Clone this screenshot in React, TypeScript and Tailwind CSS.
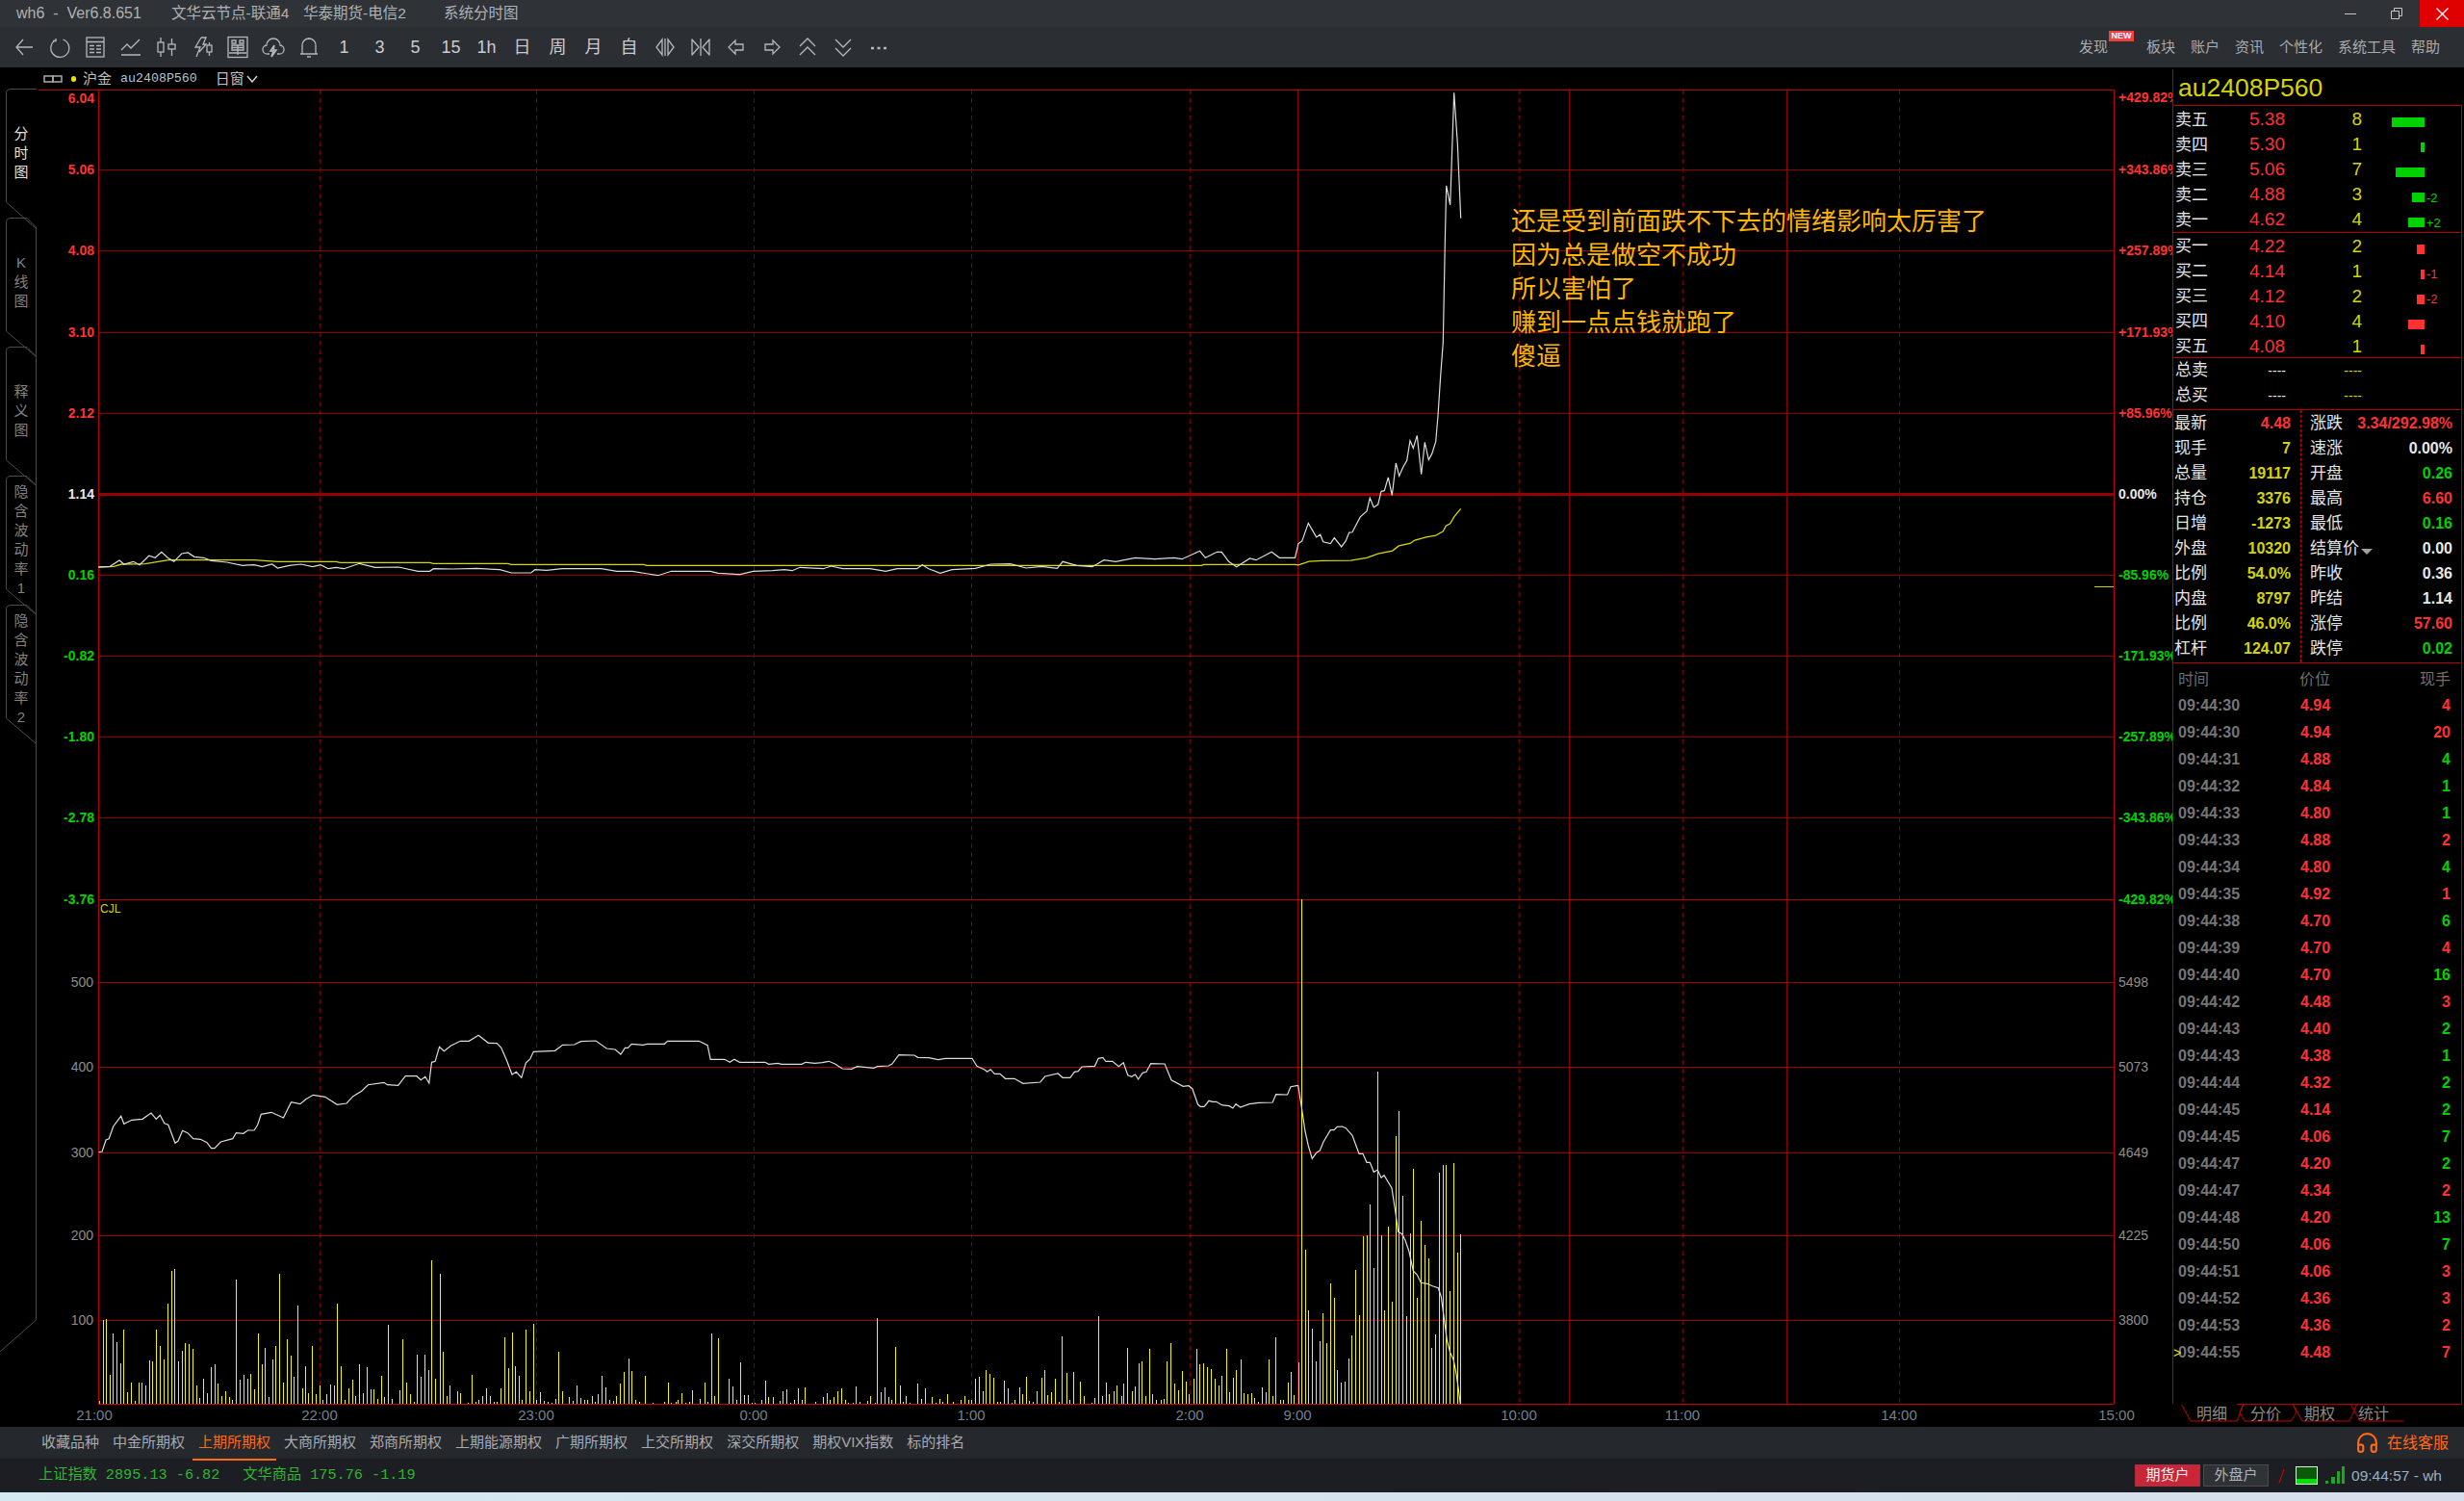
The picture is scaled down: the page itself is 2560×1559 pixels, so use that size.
import { Headphones } from 'lucide-react';

// traced from the reference, as flat [x, y, x, y ...] lists with their own offset and scale
const pairs = (flat: number[], ox: number, oy: number, sx: number, sy: number) => {
  const out: [number, number][] = [];
  for (let i = 0; i < flat.length; i += 2) out.push([ox + flat[i] / sx, oy + flat[i + 1] / sy]);
  return out;
};
const toLine = (p: [number, number][]) => p.map(([x, y]) => `${x.toFixed(1)},${y.toFixed(1)}`).join(' ');

const priceA = [15,147,30,145,42,126,48,138,60,130,68,140,80,112,88,118,96,100,104,118,112,130,122,105,130,102,138,115,150,118,160,127,180,132,200,142,215,140,225,146,238,138,245,150,260,142,275,138,290,146,300,140,310,152,320,148,330,152,350,136,370,148,400,147,425,160,440,160,445,152,470,153,500,151,530,155,545,165,570,165,575,155,590,157,610,152,640,152,660,152,680,160,700,160,720,168,733,173,750,160,780,160,800,160,810,166,838,170,855,160,880,158,895,155,905,158,915,148,945,152,955,144,970,152,1005,152,1025,160,1040,152,1065,152,1072,140,1080,152,1095,166,1110,155,1140,151,1160,138,1185,137,1205,150,1225,145,1245,151,1252,130,1270,142,1290,146,1305,125,1320,130,1345,118,1370,122,1395,118,1405,122,1428,97,1435,118,1450,100,1456,100,1465,130,1475,146,1492,120,1500,125,1520,100,1530,118,1550,118];
const priceB = [147,1405,158,1398,178,1344,203,1386,215,1378,224,1400,247,1405,259,1388,281,1415,295,1397,305,1372,315,1371,340,1325,360,1308,370,1268,382,1296,395,1288,405,1248,415,1246,427,1206,439,1260,451,1163,461,1202,473,1175,485,1155,495,1095,505,1118,517,1080,530,1197,541,1100,553,1153,563,1135,575,1098,582,1020,590,900,598,800,600,700,604,500,608,327,620,385,632,47,643,200,653,425];
const avgA = [15,147,35,145,45,138,75,137,105,125,215,125,245,130,320,130,325,133,440,133,445,136,540,136,545,139,715,139,718,142,1430,142,1433,139,1550,139];
const avgB = [147,1470,180,1459,220,1457,310,1456,360,1448,395,1436,440,1427,460,1412,495,1405,510,1395,545,1386,575,1381,598,1368,607,1352,620,1345,632,1325,653,1300];

const oiA = [28,410,36,408,45,372,52,368,62,330,80,298,87,322,105,310,130,307,150,288,162,307,171,295,181,320,190,325,206,382,213,375,223,343,235,350,248,368,265,370,280,380,290,398,298,398,312,378,340,368,348,350,365,352,375,342,390,342,398,325,406,292,430,286,458,303,476,254,497,260,510,245,527,232,555,238,583,262,605,258,620,236,640,220,655,200,692,193,700,200,725,202,742,173,768,173,778,185,788,175,797,195,803,130,811,127,821,82,832,95,848,78,870,64,890,64,912,46,935,70,955,71,965,85,978,125,990,168,1000,160,1012,178,1022,132,1032,120,1040,97,1090,94,1108,76,1135,75,1150,65,1185,63,1210,87,1230,90,1243,105,1253,85,1260,85,1268,73,1295,76,1305,73,1345,73,1352,64,1425,64,1445,77,1452,121,1485,121,1497,130,1507,121,1520,130,1560,130];
const oiB = [65,130,75,136,100,133,110,136,165,136,175,130,200,133,220,131,238,127,255,135,275,150,300,151,315,143,360,148,370,143,400,141,410,135,428,107,470,108,480,115,510,116,535,122,555,118,627,118,640,142,660,152,668,160,677,152,688,166,703,166,717,181,742,181,765,196,812,192,825,174,860,165,873,178,893,178,905,160,915,158,925,144,960,142,970,118,982,115,990,127,1008,127,1025,143,1038,131,1050,170,1060,175,1070,168,1078,183,1090,163,1100,160,1112,134,1150,135,1168,185,1200,205,1215,203,1225,212,1240,262,1247,268,1257,268,1270,250,1280,253,1290,253,1305,263,1325,266,1335,273,1343,260,1355,270,1380,260,1405,256,1443,255,1452,230,1483,231,1492,206,1512,202];
const oiC = [146,142,157,210,168,285,178,330,190,370,203,352,214,345,225,318,247,281,258,281,268,271,283,270,295,275,315,298,336,355,348,355,360,382,370,382,382,412,394,405,405,430,414,422,438,462,450,540,458,598,470,605,480,625,492,660,505,720,517,732,529,757,548,760,565,767,583,773,592,800,600,860,610,935,620,975,630,995,640,1045,652,1135];

const volA = [28,1185,37,932,45,930,53,1105,61,975,70,1002,78,1068,86,963,95,1158,103,1128,112,1185,120,1128,128,1128,137,1137,146,1060,153,1062,162,963,170,1015,180,1055,188,882,196,780,204,774,213,1062,222,1030,229,1005,238,1008,246,1023,255,1137,263,1175,272,1115,280,1160,290,1080,297,1071,305,1130,314,1170,323,1155,332,1173,339,1182,348,807,356,1118,365,1105,373,1115,381,1101,390,1150,399,975,407,1070,415,1020,423,1172,433,1055,439,1014,448,789,458,1128,466,993,475,1043,482,1110,491,888,501,1145,509,1077,516,1160,524,1014,533,1165,542,1136,549,1182,558,1163,567,1133,576,1137,583,882,592,1077,601,1182,610,1145,618,1118,626,1170,634,1071,643,1160,652,1080,660,1148,668,1148,677,1178,686,1107,692,1172,701,948,711,1178,727,1152,735,993,744,1128,753,1163,762,1188,769,1041,778,1110,786,1041,795,1089,802,747,812,1116,821,789,829,1032,837,1170,845,1137,862,1155,870,1161,887,1192,896,1104,904,1188,912,1182,921,1170,930,1146,939,1170,947,1188,955,1188,964,1146,972,987,980,1083,989,972,997,1077,1006,1107,1013,1182,1022,963,1031,1155,1040,945,1047,1182,1056,1158,1065,1185,1074,1188,1082,1192,1090,1180,1098,1032,1107,1155,1122,1173,1132,1185,1140,1137,1149,1176,1157,1182,1165,1182,1175,1170,1183,1188,1190,1164,1199,1107,1208,1143,1217,1182,1225,1185,1233,1170,1242,1131,1250,1095,1260,1053,1267,1092,1276,1182,1285,1188,1300,1107,1317,1192,1343,1188,1352,1128,1360,1192,1370,1188,1376,1182,1385,1161,1394,1192,1402,1188,1410,1152,1428,1180,1437,1128,1445,1188,1453,975,1461,1170,1470,990,1495,1115,1503,1140,1512,1182,1520,1065,1529,1167,1538,1167,1547,1192,1555,1190];
const volB = [55,1182,66,1122,74,1173,85,1173,105,1185,113,1155,123,1149,134,1191,144,1182,155,1146,164,1182,173,1143,202,1188,223,1173,233,1161,241,1182,252,1173,262,1155,272,1146,281,1182,291,1190,302,1191,312,1140,322,1188,341,1185,351,1170,362,1191,369,927,380,1158,390,1143,401,1173,408,1182,419,1017,430,1137,440,1188,448,1170,458,1191,479,1131,489,1180,498,1146,518,1173,528,1190,537,1179,547,1188,558,1164,576,1188,597,1182,607,1170,616,1182,625,1182,636,1116,646,1110,657,1155,665,1089,675,1101,685,1113,696,1188,704,1188,714,1122,725,1146,735,1191,743,1182,754,1143,764,1164,774,1110,782,1185,793,1188,803,1155,814,1113,824,1089,832,1167,842,1158,853,1116,863,1188,871,984,882,1098,892,1182,902,1095,921,1125,931,1170,950,1191,960,1176,970,921,981,1170,991,1128,999,1164,1010,1155,1020,1137,1031,1170,1038,1131,1049,1020,1060,1155,1070,1140,1078,1068,1088,1062,1098,1170,1109,1023,1117,1164,1127,1182,1138,1182,1148,1179,1156,1062,1166,1005,1177,1131,1187,1152,1198,1092,1206,1125,1216,1164,1227,1116,1237,1023,1245,1071,1255,1068,1265,1080,1276,1086,1285,1116,1295,1137,1305,1107,1316,1023,1324,1158,1334,1113,1344,1089,1355,1056,1365,1161,1374,1164,1384,1161,1394,1176,1404,1188,1413,1143,1423,1158,1433,1056,1443,1170,1451,987,1462,1182,1472,1182,1483,1128,1491,1095,1501,1167,1512,1065];
const volC = [157,-438,169,654,178,843,190,900,202,1002,214,939,223,852,235,945,247,759,259,804,268,1029,280,1068,292,1065,304,993,313,921,325,717,337,858,349,612,361,609,370,513,382,711,394,99,406,609,415,843,427,582,439,816,451,300,460,222,472,486,484,861,496,603,505,402,517,804,529,564,541,639,553,681,562,960,574,918,586,414,598,390,607,390,619,783,631,384,643,663,652,606];

const priceLine = toLine([...pairs(priceA, 90, 540, 1.2346, 3), ...pairs(priceB, 1300, 80, 3, 2.9)]);
const avgLine = toLine([...pairs(avgA, 90, 540, 1.2346, 3), ...pairs(avgB, 1300, 80, 3, 2.9)]);
const oiLine = toLine([...pairs(oiA, 90, 1060, 2.24, 3), ...pairs(oiB, 770, 1060, 2.613, 3), ...pairs(oiC, 1300, 1080, 3, 3)]);
const volBars = [...pairs(volA, 90, 1060, 2.24, 3), ...pairs(volB, 770, 1060, 2.613, 3), ...pairs(volC, 1300, 1080, 3, 3)];

const RED = '#ff3232';
const GREEN = '#00d200';
const YELLOW = '#d4d400';
const WHITE = '#e8e8e8';

const priceRows = [
  { y: 176, l: '5.06', lc: RED, r: '+343.86%', rc: RED },
  { y: 260, l: '4.08', lc: RED, r: '+257.89%', rc: RED },
  { y: 345, l: '3.10', lc: RED, r: '+171.93%', rc: RED },
  { y: 429, l: '2.12', lc: RED, r: '+85.96%', rc: RED },
  { y: 513, l: '1.14', lc: WHITE, r: '0.00%', rc: WHITE },
  { y: 597, l: '0.16', lc: GREEN, r: '-85.96%', rc: GREEN },
  { y: 681, l: '-0.82', lc: GREEN, r: '-171.93%', rc: GREEN },
  { y: 765, l: '-1.80', lc: GREEN, r: '-257.89%', rc: GREEN },
  { y: 849, l: '-2.78', lc: GREEN, r: '-343.86%', rc: GREEN },
  { y: 934, l: '-3.76', lc: GREEN, r: '-429.82%', rc: GREEN },
];
const volRows = [
  { y: 1020, l: '500', r: '5498' },
  { y: 1108, l: '400', r: '5073' },
  { y: 1197, l: '300', r: '4649' },
  { y: 1283, l: '200', r: '4225' },
  { y: 1371, l: '100', r: '3800' },
];
const dashed = [332, 557, 783, 1009, 1236, 1578, 1748, 1973];
const solid = [1348, 1630, 1856];
const timeLabels: [string, number][] = [
  ['21:00', 98], ['22:00', 332], ['23:00', 557], ['0:00', 783], ['1:00', 1009], ['2:00', 1236],
  ['9:00', 1348], ['10:00', 1578], ['11:00', 1748], ['14:00', 1973], ['15:00', 2199],
];

const Chart = () => (
  <svg viewBox="38 92 2219 1390" width={2219} height={1390} className="block text-[14px]">
    <g shapeRendering="crispEdges" fill="none">
      {dashed.map((x) => (
        <path key={x} d={`M${x}.5 93V1458`} stroke="#7a0000" strokeDasharray="5 4" />
      ))}
      {solid.map((x) => (
        <path key={x} d={`M${x}.5 93V1458`} stroke="#8f0000" />
      ))}
      {priceRows.filter((r) => r.y !== 513 && r.y !== 934).map((r) => (
        <path key={r.y} d={`M102 ${r.y}.5H2196`} stroke="#8f0000" />
      ))}
      {volRows.map((r) => (
        <path key={r.y} d={`M102 ${r.y}.5H2196`} stroke="#a00000" />
      ))}
      <path d="M40 93.5H2196" stroke="#b40000" />
      <path d="M102 513.5H2196" stroke="#960000" strokeWidth={3} />
      <path d="M102 934.5H2196" stroke="#b40000" />
      <path d="M102 1458.5H2196" stroke="#d00000" />
      <path d="M102.5 93V1458M2196.5 93V1458" stroke="#b40000" />
      <path d="M2176 609.5H2196" stroke={YELLOW} />
      {volBars.map(([x, y], i) => (
        <path key={i} d={`M${Math.round(x)}.5 ${Math.round(y)}V1458`} stroke="#f5f500" />
      ))}
    </g>
    <polyline points={avgLine} fill="none" stroke="#d8d800" strokeWidth={1.3} />
    <polyline points={priceLine} fill="none" stroke="#dcdcdc" strokeWidth={1.2} />
    <polyline points={oiLine} fill="none" stroke="#dcdcdc" strokeWidth={1.2} />

    <g fontWeight={700} dominantBaseline="central">
      <text x={98} y={102} textAnchor="end" fill={RED}>6.04</text>
      <text x={2201} y={101} fill={RED}>+429.82%</text>
      {priceRows.map((r) => (
        <g key={r.y}>
          <text x={98} y={r.y} textAnchor="end" fill={r.lc}>{r.l}</text>
          <text x={2201} y={r.y} fill={r.rc}>{r.r}</text>
        </g>
      ))}
    </g>
    <g dominantBaseline="central" fill="#8e8e8e">
      {volRows.map((r) => (
        <g key={r.y}>
          <text x={97} y={r.y} textAnchor="end">{r.l}</text>
          <text x={2201} y={r.y}>{r.r}</text>
        </g>
      ))}
      <text x={104} y={944} fontSize={12} fill={YELLOW}>CJL</text>
    </g>
    <g dominantBaseline="central" textAnchor="middle" fill="#74808c" fontSize={15}>
      {timeLabels.map(([t, x]) => (
        <text key={t} x={x} y={1469}>{t}</text>
      ))}
    </g>
  </svg>
);

const SideTab = ({ label, active }: { label: string[]; active?: boolean }) => (
  <div className="relative h-[134px] w-[38px] flex flex-col items-center justify-center">
    <svg className="absolute left-0 top-0 overflow-visible" width={38} height={134} fill="none" stroke="#4a4a4a">
      {active ? (
        <path d="M38 .5H11Q6.500 .5 6.500 5V118L37 145" />
      ) : (
        <path d="M37.500 144V10L28 .5H11Q6.500 .5 6.500 5V118L37 144" />
      )}
    </svg>
    {label.map((c) => (
      <span key={c} className={`pl-[6px] text-[15px] leading-[20px] ${active ? 'text-[#e0e0e0]' : 'text-[#808080]'}`}>
        {c}
      </span>
    ))}
  </div>
);

const Ico = ({ children }: { children: React.ReactNode }) => (
  <svg width={24} height={24} viewBox="0 0 24 24" fill="none" stroke="#b4b8bc" strokeWidth={1.3}>
    {children}
  </svg>
);

const toolIcons = [
  <Ico key="back"><path d="M11 4 4 12l7 8M4 12h17" /></Ico>,
  <Ico key="refresh"><path d="M8 4.500a9.500 9.500 0 1 0 7.500-.5M8 3v2.500H5" /></Ico>,
  <Ico key="table"><rect x="3" y="2" width="18" height="20" /><path d="M3 6.500h18M6 10.500h5M13 10.500h5M6 14h5M13 14h5M6 17.500h5M13 17.500h5" /></Ico>,
  <Ico key="line"><path d="M2 15l6-6 4 4 9-9M2 20h20" /></Ico>,
  <Ico key="candle"><rect x="3" y="7" width="6" height="10" /><path d="M6 2v5M6 17v5" /><rect x="14" y="9" width="7" height="5" /><path d="M17.500 3v6M17.500 14v7" /></Ico>,
  <Ico key="flash"><path d="M11 2 5 12h5l-4 10M11 2h5l-3 7h3L9 17" /><rect x="17" y="10" width="5" height="7" /><path d="M19.500 7v3M19.500 17v4" /></Ico>,
  <Ico key="box"><rect x="2" y="1.500" width="20" height="21" /><path d="M6 5h4v3H6zM14 5h4v3h-4zM6 10h12v5H6zM6 12.500h12M12 10v10M3 18h18" /></Ico>,
  <Ico key="cloud"><path d="M8 19H6a4.500 4.500 0 0 1-1-9 7 7 0 0 1 14 0 4.500 4.500 0 0 1-1 9h-2" /><path d="M13 10l-4 6h3l-2 6 5-7h-3l1-5" strokeWidth={1.6} /></Ico>,
  <Ico key="bell"><path d="M12 2v2M5 19V10a7 7 0 0 1 14 0v9M3 19h18M10 22h4" /></Ico>,
];
const periods = ['1', '3', '5', '15', '1h', '日', '周', '月', '自'];
const toolIconsEnd = [
  <Ico key="spread"><path d="M9 4 3 12l6 8zM15 4l6 8-6 8zM12 3v18" /></Ico>,
  <Ico key="merge"><path d="M3 4l7 8-7 8zM21 4l-7 8 7 8zM12 3v18" strokeLinejoin="round" /></Ico>,
  <Ico key="prev"><path d="M11 5 4 12l7 7v-4h8V9h-8z" /></Ico>,
  <Ico key="next"><path d="M13 5l7 7-7 7v-4H5V9h8z" /></Ico>,
  <Ico key="up"><path d="M4 11l8-8 8 8M4 20l8-8 8 8" /></Ico>,
  <Ico key="down"><path d="M4 4l8 8 8-8M4 13l8 8 8-8" /></Ico>,
  <Ico key="more"><path d="M4 13h3M10.500 13h3M17 13h3" strokeWidth={2.4} /></Ico>,
];

const sells = [
  { n: '卖五', p: '5.38', q: 8 },
  { n: '卖四', p: '5.30', q: 1 },
  { n: '卖三', p: '5.06', q: 7 },
  { n: '卖二', p: '4.88', q: 3, d: '-2' },
  { n: '卖一', p: '4.62', q: 4, d: '+2' },
];
const buys = [
  { n: '买一', p: '4.22', q: 2 },
  { n: '买二', p: '4.14', q: 1, d: '-1' },
  { n: '买三', p: '4.12', q: 2, d: '-2' },
  { n: '买四', p: '4.10', q: 4 },
  { n: '买五', p: '4.08', q: 1 },
];

const OrderRow = ({ row, buy }: { row: { n: string; p: string; q: number; d?: string }; buy?: boolean }) => (
  <div className="grid h-[26px] shrink-0 grid-cols-[79px_60px_57px_65px_auto] items-center">
    <span className="pl-[2px] text-[17px] text-[#e4e4e4]">{row.n}</span>
    <span className="text-[19px] text-[#ff3232]">{row.p}</span>
    <span className="text-right text-[19px] text-[#d4d400]">{row.q}</span>
    <div className="flex justify-end pt-[6px]">
      <div className={`h-[10px] ${buy ? 'bg-[#ff3232]' : 'bg-[#00d200]'}`} style={{ width: row.q * 4.25 }} />
    </div>
    <span className={`pl-[2px] pt-[6px] text-[13px] ${buy ? 'text-[#ff3232]' : 'text-[#00d200]'}`}>{row.d}</span>
  </div>
);

const stats: [string, string, string, string, string, string][] = [
  ['最新', '4.48', 'text-[#ff3232]', '涨跌', '3.34/292.98%', 'text-[#ff3232]'],
  ['现手', '7', 'text-[#d4d400]', '速涨', '0.00%', 'text-[#e8e8e8]'],
  ['总量', '19117', 'text-[#d4d400]', '开盘', '0.26', 'text-[#00d200]'],
  ['持仓', '3376', 'text-[#d4d400]', '最高', '6.60', 'text-[#ff3232]'],
  ['日增', '-1273', 'text-[#d4d400]', '最低', '0.16', 'text-[#00d200]'],
  ['外盘', '10320', 'text-[#d4d400]', '结算价', '0.00', 'text-[#e8e8e8]'],
  ['比例', '54.0%', 'text-[#d4d400]', '昨收', '0.36', 'text-[#e8e8e8]'],
  ['内盘', '8797', 'text-[#d4d400]', '昨结', '1.14', 'text-[#e8e8e8]'],
  ['比例', '46.0%', 'text-[#d4d400]', '涨停', '57.60', 'text-[#ff3232]'],
  ['杠杆', '124.07', 'text-[#d4d400]', '跌停', '0.02', 'text-[#00d200]'],
];

// [seconds, price, qty, up]
const trades: [string, string, number, boolean][] = [
  ['30', '4.94', 4, true], ['30', '4.94', 20, true], ['31', '4.88', 4, false], ['32', '4.84', 1, false],
  ['33', '4.80', 1, false], ['33', '4.88', 2, true], ['34', '4.80', 4, false], ['35', '4.92', 1, true],
  ['38', '4.70', 6, false], ['39', '4.70', 4, true], ['40', '4.70', 16, false], ['42', '4.48', 3, true],
  ['43', '4.40', 2, false], ['43', '4.38', 1, false], ['44', '4.32', 2, false], ['45', '4.14', 2, false],
  ['45', '4.06', 7, false], ['47', '4.20', 2, false], ['47', '4.34', 2, true], ['48', '4.20', 13, false],
  ['50', '4.06', 7, false], ['51', '4.06', 3, true], ['52', '4.36', 3, true], ['53', '4.36', 2, true],
  ['55', '4.48', 7, true],
];

const navItems = ['收藏品种', '中金所期权', '上期所期权', '大商所期权', '郑商所期权', '上期能源期权', '广期所期权', '上交所期权', '深交所期权', '期权VIX指数', '标的排名'];

const Panel = () => (
  <div className="flex h-full w-[303px] flex-col pr-[2px] pt-[2px]">
    <div className="flex h-[1387px] flex-col border-b border-l border-[#b40000]">
      <div className="flex h-[37px] shrink-0 items-center pl-[5px] pt-[2px] text-[26.500px] text-[#d4d400]">au2408P560</div>
      <div className="flex-1 border-r border-t border-[#b40000]">
        <div className="h-[132px] border-b border-[#b40000]">
          {sells.map((r) => <OrderRow key={r.n} row={r} />)}
        </div>
        <div className="flex h-[130px] flex-col justify-center border-b border-[#b40000]">
          {buys.map((r) => <OrderRow key={r.n} row={r} buy />)}
        </div>
        <div className="h-[54px] border-b border-[#b40000]">
          {['总卖', '总买'].map((n) => (
            <div key={n} className="grid h-[26px] grid-cols-[79px_60px_57px] items-center">
              <span className="pl-[2px] text-[17px] text-[#e4e4e4]">{n}</span>
              <span className="text-right text-[14px] text-[#e4e4e4] pr-[22px]">----</span>
              <span className="text-right text-[14px] text-[#d4d400]">----</span>
            </div>
          ))}
        </div>
        <div className="relative h-[263px] border-b border-[#b40000] pt-[1px]">
          <div className="absolute bottom-0 left-[132px] top-0 border-l border-dashed border-[#d00000]" />
          {stats.map(([a, b, bc, c, d, dc], i) => (
            <div key={i} className="flex h-[26px] items-center font-bold">
              <div className="flex w-[132px] items-center justify-between pl-[1px] pr-[10px]">
                <span className="font-normal text-[17px] text-[#e4e4e4]">{a}</span>
                <span className={`text-[16px] ${bc}`}>{b}</span>
              </div>
              <div className="flex w-[167px] items-center justify-between pl-[10px] pr-[9px]">
                <span className="flex items-center font-normal text-[17px] text-[#e4e4e4]">
                  {c}
                  {c === '结算价' && (
                    <svg width={12} height={6} className="ml-[2px] mt-[6px]"><path d="M0 0h12L6 6z" fill="#a0a0a0" /></svg>
                  )}
                </span>
                <span className={`text-[16px] ${dc}`}>{d}</span>
              </div>
            </div>
          ))}
        </div>
        <div className="flex h-[30px] items-center pt-[3px] text-[16px] text-[#6e6e6e]">
          <span className="w-[131px] pl-[5px]">时间</span>
          <span className="flex-1">价位</span>
          <span className="pr-[11px]">现手</span>
        </div>
        {trades.map(([s, p, q, up], i) => (
          <div key={i} className="relative flex h-[28px] items-center text-[16px] font-bold">
            {i === trades.length - 1 && <span className="absolute left-[0px] text-[14px] font-normal text-[#e6e600]">&gt;</span>}
            <span className="w-[132px] pl-[5px] text-[#757575]">09:44:{s}</span>
            <span className="flex-1 text-[#ff3232]">{p}</span>
            <span className={`pr-[11px] ${up ? 'text-[#ff3232]' : 'text-[#00d200]'}`}>{q}</span>
          </div>
        ))}
      </div>
    </div>
    <div className="relative flex h-[22px] pl-[15px] text-[16px] leading-[20px] text-[#8a8a8a]">
      <svg className="absolute left-0 top-[-1px]" width={240} height={20} fill="none" stroke="#c80000">
        <path d="M9 0l10 18h48l7-18M74 0l-4 9 5 9h48l6-9-4-9M125 0l5 9 5 9h49l8-18M185 0l5 9 5 9h47" />
        <path d="M9 .5h1M67 .5H0" stroke="#000" />
      </svg>
      <span className="relative ml-[10px] w-[56px]">明细</span>
      <span className="relative w-[56px]">分价</span>
      <span className="relative w-[56px]">期权</span>
      <span className="relative w-[56px]">统计</span>
    </div>
  </div>
);

export default function App() {
  return (
    <div className="flex h-[1559px] w-[2560px] flex-col overflow-hidden bg-black font-['Liberation_Sans','Noto_Sans_CJK_SC',sans-serif]">
      {/* title bar */}
      <div className="flex h-[28px] shrink-0 items-center bg-[#2f3237] pl-[17px] text-[15.500px] text-[#aeb2b6]">
        <span className="w-[161px] whitespace-pre text-[16px]">wh6  -  Ver6.8.651</span>
        <span className="w-[137px]">文华云节点-联通4</span>
        <span className="w-[146px]">华泰期货-电信2</span>
        <span>系统分时图</span>
        <div className="ml-auto flex h-full items-center">
          <svg width={12} height={12} className="mr-[36px]" stroke="#c8c8c8"><path d="M0 6.500h12" /></svg>
          <svg width={12} height={12} className="mr-[18px]" fill="none" stroke="#c8c8c8"><path d="M.5 3.500h8v8h-8zM3.500 3V.5h8v8H9" /></svg>
          <div className="flex h-full w-[46px] items-center justify-center bg-[#e00000]">
            <svg width={13} height={13} stroke="#fff" strokeWidth={1.3}><path d="M.5.5l12 12M12.500.5l-12 12" /></svg>
          </div>
        </div>
      </div>

      {/* toolbar */}
      <div className="flex h-[42px] shrink-0 items-center bg-[#2b2e33] pl-[6px] pr-[25px] text-[#c8ccd0]">
        {toolIcons.map((ic) => (
          <div key={ic.key} className="flex w-[37px] justify-center">{ic}</div>
        ))}
        {periods.map((p) => (
          <div key={p} className="flex w-[37px] justify-center text-[18px]">{p}</div>
        ))}
        {toolIconsEnd.map((ic) => (
          <div key={ic.key} className="flex w-[37px] justify-center">{ic}</div>
        ))}
        <div className="ml-auto flex items-center gap-[16px] text-[15px] text-[#a8acb0]">
          <span className="relative mr-[24px]">
            发现
            <span className="absolute left-[31px] top-[-6px] h-[11px] w-[26px] bg-[#f04040] text-center text-[9px] font-bold leading-[11px] text-white">NEW</span>
          </span>
          {['板块', '账户', '资讯', '个性化', '系统工具', '帮助'].map((t) => (
            <span key={t}>{t}</span>
          ))}
        </div>
      </div>

      <div className="flex min-h-0 flex-1">
        {/* period tabs */}
        <div className="relative w-[38px] shrink-0 pt-[22px]">
          <SideTab label={['分', '时', '图']} active />
          <SideTab label={['K', '线', '图']} />
          <SideTab label={['释', '义', '图']} />
          <SideTab label={['隐', '含', '波', '动', '率', '1']} />
          <SideTab label={['隐', '含', '波', '动', '率', '2']} />
          <svg className="absolute left-0 top-[700px]" width={38} height={640} fill="none" stroke="#4a4a4a">
            <path d="M37.500 0V601L0 634" />
          </svg>
        </div>

        {/* chart */}
        <div className="relative w-[2219px] shrink-0">
          <div className="flex h-[22px] items-center pl-[7px] pt-[2px] text-[15px] text-[#c0c0c0]">
            <svg width={20} height={8} fill="none" stroke="#aaa" strokeWidth={1.5} className="mr-[9px]">
              <rect x="1" y="1" width="9" height="6" /><rect x="10" y="1" width="9" height="6" />
            </svg>
            <span className="mr-[7px] h-[6px] w-[5px] rounded-full bg-[#e6e600]" />
            <span className="mr-[9px]">沪金</span>
            <span className="mr-[19px] font-['Liberation_Mono',monospace] text-[13.300px]">au2408P560</span>
            <span>日窗</span>
            <svg width={12} height={8} fill="none" stroke="#ccc" strokeWidth={1.5} className="ml-[2px]"><path d="M1 1l5 6 5-6" /></svg>
          </div>
          <Chart />
          <div className="absolute left-[1532px] top-[143px] text-[26px] leading-[35px] text-[#ffb400]">
            <p>还是受到前面跌不下去的情绪影响太厉害了</p>
            <p>因为总是做空不成功</p>
            <p>所以害怕了</p>
            <p>赚到一点点钱就跑了</p>
            <p>傻逼</p>
          </div>
        </div>

        <Panel />
      </div>

      {/* exchange tabs */}
      <div className="flex h-[33px] shrink-0 items-center bg-[#25282d] pl-[43px] pr-[16px] text-[15px] text-[#a8acb0]">
        <div className="flex gap-[14px]">
          {navItems.map((n) => (
            <span key={n} className={n === '上期所期权' ? 'relative text-[#ff6a13]' : ''}>
              {n}
              {n === '上期所期权' && <span className="absolute -left-[6px] -right-[6px] bottom-[-7px] h-[2px] bg-[#ff6a13]" />}
            </span>
          ))}
        </div>
        <div className="ml-auto flex items-center gap-[8px] text-[16px] text-[#ff6a13]">
          <Headphones size={25} strokeWidth={2} />
          <span>在线客服</span>
        </div>
      </div>

      {/* status bar */}
      <div className="flex h-[35px] shrink-0 items-center bg-[#1c1e23] pl-[40px] pr-[23px]">
        <span className="font-['Liberation_Mono','Noto_Sans_CJK_SC',monospace] text-[15.200px] text-[#2fb52f]">上证指数 2895.13 -6.82</span>
        <span className="ml-[24px] font-['Liberation_Mono','Noto_Sans_CJK_SC',monospace] text-[15.200px] text-[#2fb52f]">文华商品 175.76 -1.19</span>
        <div className="ml-auto flex items-center text-[15px]">
          <span className="flex h-[23px] w-[68px] items-center justify-center border border-[#a83040] bg-[#c9263a] text-[#f0f0f0]">期货户</span>
          <span className="ml-[3px] flex h-[23px] w-[68px] items-center justify-center border border-[#484c52] bg-[#2f3338] text-[#aeb2b6]">外盘户</span>
          <svg width={7} height={14} className="ml-[10px]" stroke="#e00000"><path d="M1 14 6 0" /></svg>
          <div className="ml-[11px] flex h-[19px] w-[23px] flex-col justify-end border border-[#e8e8e8] bg-[#0a5a0a]">
            <div className="h-[5px] bg-[#00e000]" />
          </div>
          <svg width={20} height={19} className="ml-[8px]" fill="#1fa51f"><path d="M0 15h3v3H0zM6 11h4v7H6zM12 5h3v13h-3zM17 0h3v18h-3z" /></svg>
          <span className="ml-[7px] text-[15.500px] text-[#9ab0c4]">09:44:57 - wh</span>
        </div>
      </div>

      <div className="h-[9px] shrink-0 bg-gradient-to-r from-[#d4e9f2] to-[#d6dfeb]" />
    </div>
  );
}
